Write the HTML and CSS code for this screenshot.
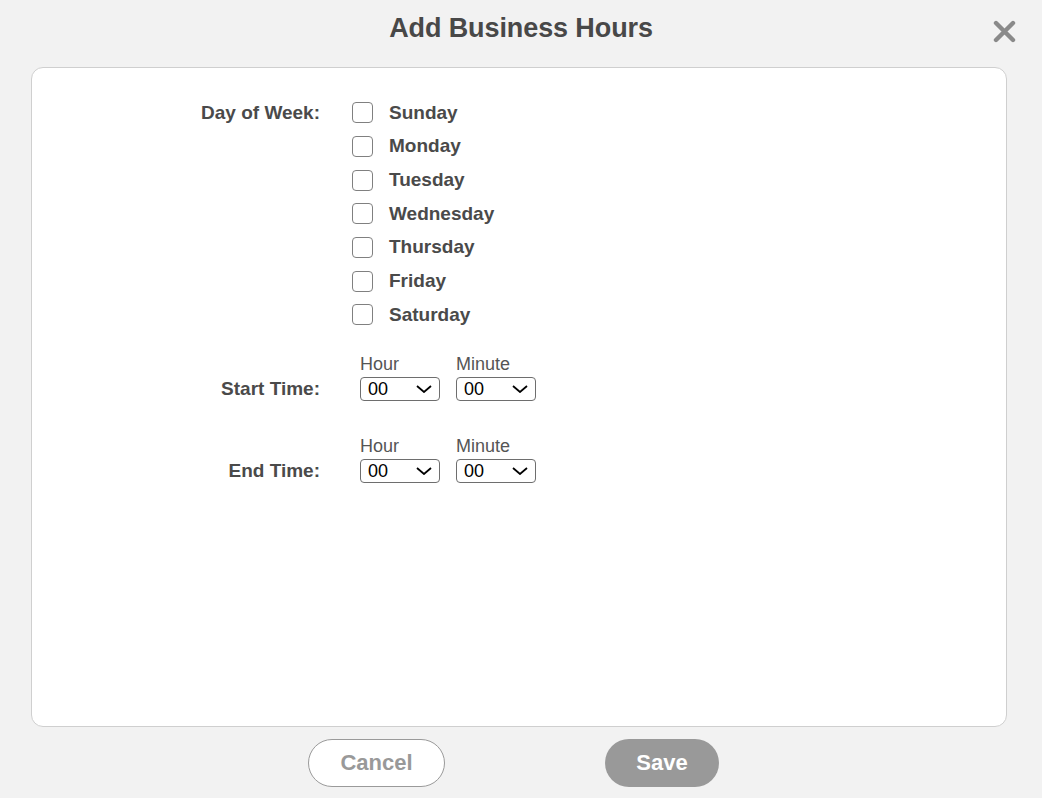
FILE: index.html
```html
<!DOCTYPE html>
<html lang="en">
<head>
    <meta charset="UTF-8">
    <meta name="viewport" content="width=device-width, initial-scale=1.0">
    <title>Add Business Hours</title>
    <link rel="stylesheet" href="styles.css">
</head>
<body>

<header class="dialog-header">
    <h1 class="dialog-title">Add Business Hours</h1>
    <button class="close-btn" aria-label="Close">
        <svg width="23" height="23" viewBox="0 0 23 23">
            <path d="M3 3 L20 20 M20 3 L3 20" stroke="#8a8a8a" stroke-width="4.4" stroke-linecap="round" fill="none"/>
        </svg>
    </button>
</header>

<div class="dialog-card">
    <div class="form-grid">
        <div class="form-label days-label">Day of Week:</div>
        <div class="day-list">
            <label class="day-row"><input type="checkbox" class="day-check"><span>Sunday</span></label>
            <label class="day-row"><input type="checkbox" class="day-check"><span>Monday</span></label>
            <label class="day-row"><input type="checkbox" class="day-check"><span>Tuesday</span></label>
            <label class="day-row"><input type="checkbox" class="day-check"><span>Wednesday</span></label>
            <label class="day-row"><input type="checkbox" class="day-check"><span>Thursday</span></label>
            <label class="day-row"><input type="checkbox" class="day-check"><span>Friday</span></label>
            <label class="day-row"><input type="checkbox" class="day-check"><span>Saturday</span></label>
        </div>

        <div class="form-label time-label start-label">Start Time:</div>
        <div class="time-group start-group">
            <div class="time-field">
                <div class="time-caption">Hour</div>
                <div class="select-wrap">
                    <select class="time-select"><option>00</option></select>
                    <svg class="chevron" width="16" height="8" viewBox="0 0 16 8"><polyline points="1,1 8,7 15,1" fill="none" stroke="#000" stroke-width="1.8"/></svg>
                </div>
            </div>
            <div class="time-field">
                <div class="time-caption">Minute</div>
                <div class="select-wrap">
                    <select class="time-select"><option>00</option></select>
                    <svg class="chevron" width="16" height="8" viewBox="0 0 16 8"><polyline points="1,1 8,7 15,1" fill="none" stroke="#000" stroke-width="1.8"/></svg>
                </div>
            </div>
        </div>

        <div class="form-label time-label end-label">End Time:</div>
        <div class="time-group end-group">
            <div class="time-field">
                <div class="time-caption">Hour</div>
                <div class="select-wrap">
                    <select class="time-select"><option>00</option></select>
                    <svg class="chevron" width="16" height="8" viewBox="0 0 16 8"><polyline points="1,1 8,7 15,1" fill="none" stroke="#000" stroke-width="1.8"/></svg>
                </div>
            </div>
            <div class="time-field">
                <div class="time-caption">Minute</div>
                <div class="select-wrap">
                    <select class="time-select"><option>00</option></select>
                    <svg class="chevron" width="16" height="8" viewBox="0 0 16 8"><polyline points="1,1 8,7 15,1" fill="none" stroke="#000" stroke-width="1.8"/></svg>
                </div>
            </div>
        </div>
    </div>
</div>

<div class="dialog-footer">
    <button class="btn btn-cancel">Cancel</button>
    <button class="btn btn-save">Save</button>
</div>

</body>
</html>
```

FILE: styles.css
```css
body {
    margin: 0;
    font-family: 'Liberation Sans', Arial, sans-serif;
    background-color: #f2f2f2;
    color: #4a4a4a;
}

.dialog-header {
    position: relative;
    height: 67px;
}

.dialog-title {
    margin: 0;
    text-align: center;
    font-size: 27px;
    line-height: 56px;
    font-weight: bold;
    color: #484848;
    letter-spacing: -0.1px;
}

.close-btn {
    position: absolute;
    top: 20px;
    left: 993px;
    width: 23px;
    height: 23px;
    padding: 0;
    border: none;
    background: none;
    cursor: pointer;
}

.close-btn svg {
    display: block;
}

.dialog-card {
    box-sizing: border-box;
    height: 660px;
    margin: 0 35px 0 31px;
    background-color: #fff;
    border: 1px solid #cfcfcf;
    border-radius: 12px;
    padding-top: 28px;
}

.form-grid {
    display: grid;
    grid-template-columns: 288px 1fr;
    column-gap: 32px;
}

.form-label {
    text-align: right;
    font-size: 19px;
    font-weight: bold;
    color: #4a4a4a;
}

.days-label {
    line-height: 33.67px;
}

.day-list {
    display: flex;
    flex-direction: column;
}

.day-row {
    display: flex;
    align-items: center;
    gap: 16px;
    height: 33.67px;
    font-size: 19px;
    font-weight: bold;
    cursor: pointer;
}

.day-check {
    appearance: none;
    -webkit-appearance: none;
    box-sizing: border-box;
    width: 21px;
    height: 21px;
    margin: 0;
    border: 1.5px solid #808080;
    border-radius: 4px;
    background-color: #fff;
}

.time-label {
    align-self: end;
    line-height: 24px;
}

.time-group {
    display: flex;
    gap: 16px;
    padding-left: 8px;
}

.start-group {
    margin-top: 22px;
}

.end-group {
    margin-top: 35px;
}

.time-caption {
    font-size: 18px;
    line-height: 20px;
    color: #555;
    margin-bottom: 3px;
}

.select-wrap {
    position: relative;
    width: 80px;
    height: 24px;
}

.time-select {
    appearance: none;
    -webkit-appearance: none;
    box-sizing: border-box;
    width: 80px;
    height: 24px;
    margin: 0;
    padding: 0 0 0 7px;
    border: 1px solid #6e6e6e;
    border-radius: 4px;
    background-color: #fff;
    font-family: 'Liberation Sans', Arial, sans-serif;
    font-size: 18px;
    color: #000;
}

.chevron {
    position: absolute;
    right: 8px;
    top: 8px;
    pointer-events: none;
}

.dialog-footer {
    display: flex;
    justify-content: center;
    gap: 160px;
    padding: 12px 15px 0 0;
}

.btn {
    height: 48px;
    border-radius: 24px;
    font-family: 'Liberation Sans', Arial, sans-serif;
    font-size: 22px;
    font-weight: bold;
    cursor: pointer;
}

.btn-cancel {
    width: 137px;
    background-color: #fff;
    border: 1px solid #9a9a9a;
    color: #999;
}

.btn-save {
    width: 114px;
    background-color: #999;
    border: none;
    color: #fff;
}
```
